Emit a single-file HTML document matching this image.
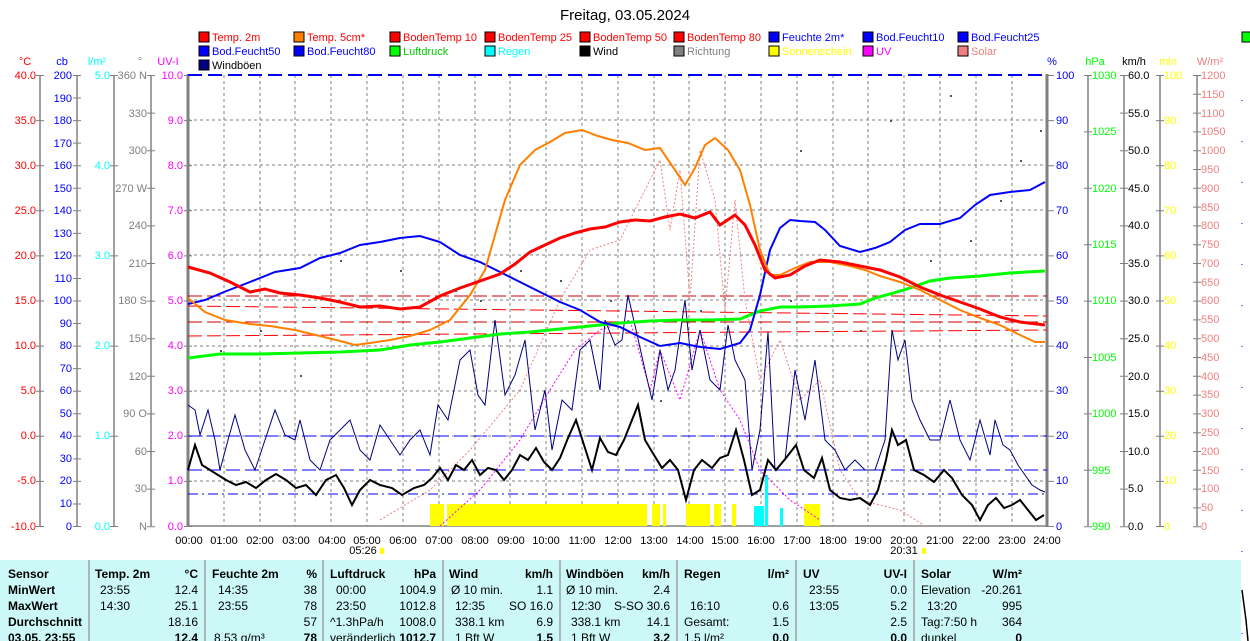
<!DOCTYPE html>
<html><head><meta charset="utf-8"><style>
html,body{margin:0;padding:0;background:#fff;width:1250px;height:641px;overflow:hidden}
svg{position:absolute;left:0;top:0}
text{font-family:"Liberation Sans",sans-serif;font-size:11px}
.t{font-size:12px}
.b{font-weight:bold}
</style></head><body>
<svg width="1250" height="641" xmlns="http://www.w3.org/2000/svg">
<text x="625" y="20" text-anchor="middle" style="font-size:15px">Freitag, 03.05.2024</text>
<g>
<rect x="199" y="32" width="10" height="10" fill="#f00" stroke="#000"/><text x="212" y="41" fill="#f00">Temp. 2m</text>
<rect x="294" y="32" width="10" height="10" fill="#ff8000" stroke="#000"/><text x="307" y="41" fill="#f00">Temp. 5cm*</text>
<rect x="390" y="32" width="10" height="10" fill="#f00" stroke="#000"/><text x="403" y="41" fill="#f00">BodenTemp 10</text>
<rect x="485" y="32" width="10" height="10" fill="#f00" stroke="#000"/><text x="498" y="41" fill="#f00">BodenTemp 25</text>
<rect x="580" y="32" width="10" height="10" fill="#f00" stroke="#000"/><text x="593" y="41" fill="#f00">BodenTemp 50</text>
<rect x="674" y="32" width="10" height="10" fill="#f00" stroke="#000"/><text x="687" y="41" fill="#f00">BodenTemp 80</text>
<rect x="769" y="32" width="10" height="10" fill="#00f" stroke="#000"/><text x="782" y="41" fill="#00f">Feuchte 2m*</text>
<rect x="863" y="32" width="10" height="10" fill="#00f" stroke="#000"/><text x="876" y="41" fill="#00f">Bod.Feucht10</text>
<rect x="958" y="32" width="10" height="10" fill="#00f" stroke="#000"/><text x="971" y="41" fill="#00f">Bod.Feucht25</text>
<rect x="1242" y="32" width="10" height="10" fill="#0f0" stroke="#000"/>
<rect x="199" y="46" width="10" height="10" fill="#00f" stroke="#000"/><text x="212" y="55" fill="#00f">Bod.Feucht50</text>
<rect x="294" y="46" width="10" height="10" fill="#00f" stroke="#000"/><text x="307" y="55" fill="#00f">Bod.Feucht80</text>
<rect x="390" y="46" width="10" height="10" fill="#0f0" stroke="#000"/><text x="403" y="55" fill="#0c0">Luftdruck</text>
<rect x="485" y="46" width="10" height="10" fill="#0ff" stroke="#000"/><text x="498" y="55" fill="#0ff">Regen</text>
<rect x="580" y="46" width="10" height="10" fill="#000" stroke="#000"/><text x="593" y="55">Wind</text>
<rect x="674" y="46" width="10" height="10" fill="#808080" stroke="#000"/><text x="687" y="55" fill="#808080">Richtung</text>
<rect x="769" y="46" width="10" height="10" fill="#ff0" stroke="#000"/><text x="782" y="55" fill="#ff0">Sonnenschein</text>
<rect x="863" y="46" width="10" height="10" fill="#f0f" stroke="#000"/><text x="876" y="55" fill="#f0f">UV</text>
<rect x="958" y="46" width="10" height="10" fill="#f08080" stroke="#000"/><text x="971" y="55" fill="#f08080">Solar</text>
<rect x="199" y="60" width="10" height="10" fill="#000080" stroke="#000"/><text x="212" y="69">Windböen</text>
</g>
<text x="25" y="65" fill="#f00" text-anchor="middle">°C</text>
<text x="62" y="65" fill="#00f" text-anchor="middle">cb</text>
<text x="97" y="65" fill="#0ff" text-anchor="middle">l/m²</text>
<text x="140" y="65" fill="#808080" text-anchor="middle">°</text>
<text x="168" y="65" fill="#f0f" text-anchor="middle">UV-I</text>
<text x="1052" y="65" fill="#00f" text-anchor="middle">%</text>
<text x="1095" y="65" fill="#0f0" text-anchor="middle">hPa</text>
<text x="1134" y="65" text-anchor="middle">km/h</text>
<text x="1168" y="65" fill="#ff0" text-anchor="middle">min</text>
<text x="1210" y="65" fill="#f08080" text-anchor="middle">W/m²</text>
<g stroke="#808080" stroke-width="1.5">
<line x1="40" y1="75" x2="40" y2="526"/><line x1="77" y1="75" x2="77" y2="526"/><line x1="114" y1="75" x2="114" y2="526"/><line x1="151" y1="75" x2="151" y2="526"/>
<line x1="1088" y1="75" x2="1088" y2="526"/><line x1="1124" y1="75" x2="1124" y2="526"/><line x1="1160" y1="75" x2="1160" y2="526"/><line x1="1197" y1="75" x2="1197" y2="526"/>
</g>
<!-- ticks -->
<g stroke="#808080" stroke-width="8">
<line x1="40" y1="75" x2="40" y2="528" stroke-dasharray="1,44.1"/>
<line x1="77" y1="75" x2="77" y2="528" stroke-dasharray="1,21.55"/>
<line x1="114" y1="75" x2="114" y2="528" stroke-dasharray="1,89.2"/>
<line x1="151" y1="75" x2="151" y2="528" stroke-dasharray="1,36.6"/>
<line x1="188" y1="75" x2="188" y2="528" stroke-dasharray="1,44.1"/>
<line x1="1050" y1="75" x2="1050" y2="528" stroke-dasharray="1,44.1"/>
<line x1="1088" y1="75" x2="1088" y2="528" stroke-dasharray="1,55.4"/>
<line x1="1124" y1="75" x2="1124" y2="528" stroke-dasharray="1,36.6"/>
<line x1="1160" y1="75" x2="1160" y2="528" stroke-dasharray="1,44.1"/>
<line x1="1197" y1="75" x2="1197" y2="528" stroke-dasharray="1,17.8"/>
</g>
<g fill="#f00" text-anchor="end">
<text x="36" y="79">40.0</text><text x="36" y="124">35.0</text><text x="36" y="169">30.0</text><text x="36" y="214">25.0</text><text x="36" y="259">20.0</text><text x="36" y="304">15.0</text><text x="36" y="349">10.0</text><text x="36" y="394">5.0</text><text x="36" y="439">0.0</text><text x="36" y="484">-5.0</text><text x="36" y="530">-10.0</text>
</g>
<g fill="#00f" text-anchor="end">
<text x="72" y="79">200</text><text x="72" y="102">190</text><text x="72" y="124">180</text><text x="72" y="147">170</text><text x="72" y="169">160</text><text x="72" y="192">150</text><text x="72" y="214">140</text><text x="72" y="237">130</text><text x="72" y="259">120</text><text x="72" y="282">110</text><text x="72" y="304">100</text><text x="72" y="327">90</text><text x="72" y="349">80</text><text x="72" y="372">70</text><text x="72" y="394">60</text><text x="72" y="417">50</text><text x="72" y="439">40</text><text x="72" y="462">30</text><text x="72" y="484">20</text><text x="72" y="507">10</text><text x="72" y="530">0</text>
</g>
<g fill="#0ff" text-anchor="end">
<text x="110" y="79">5.0</text><text x="110" y="169">4.0</text><text x="110" y="259">3.0</text><text x="110" y="349">2.0</text><text x="110" y="439">1.0</text><text x="110" y="530">0.0</text>
</g>
<g fill="#808080" text-anchor="end">
<text x="147" y="79">360 N</text><text x="147" y="117">330</text><text x="147" y="154">300</text><text x="147" y="192">270 W</text><text x="147" y="229">240</text><text x="147" y="267">210</text><text x="147" y="304">180 S</text><text x="147" y="342">150</text><text x="147" y="380">120</text><text x="147" y="417">90 O</text><text x="147" y="455">60</text><text x="147" y="492">30</text><text x="147" y="530">N</text>
</g>
<g fill="#f0f" text-anchor="end">
<text x="183" y="79">10.0</text><text x="183" y="124">9.0</text><text x="183" y="169">8.0</text><text x="183" y="214">7.0</text><text x="183" y="259">6.0</text><text x="183" y="304">5.0</text><text x="183" y="349">4.0</text><text x="183" y="394">3.0</text><text x="183" y="439">2.0</text><text x="183" y="484">1.0</text><text x="183" y="530">0.0</text>
</g>
<g fill="#00f">
<text x="1056" y="79">100</text><text x="1056" y="124">90</text><text x="1056" y="169">80</text><text x="1056" y="214">70</text><text x="1056" y="259">60</text><text x="1056" y="304">50</text><text x="1056" y="349">40</text><text x="1056" y="394">30</text><text x="1056" y="439">20</text><text x="1056" y="484">10</text><text x="1056" y="530">0</text>
</g>
<g fill="#0f0">
<text x="1092" y="79">1030</text><text x="1092" y="135">1025</text><text x="1092" y="192">1020</text><text x="1092" y="248">1015</text><text x="1092" y="304">1010</text><text x="1092" y="361">1005</text><text x="1092" y="417">1000</text><text x="1092" y="474">995</text><text x="1092" y="530">990</text>
</g>
<g>
<text x="1128" y="79">60.0</text><text x="1128" y="117">55.0</text><text x="1128" y="154">50.0</text><text x="1128" y="192">45.0</text><text x="1128" y="229">40.0</text><text x="1128" y="267">35.0</text><text x="1128" y="304">30.0</text><text x="1128" y="342">25.0</text><text x="1128" y="380">20.0</text><text x="1128" y="417">15.0</text><text x="1128" y="455">10.0</text><text x="1128" y="492">5.0</text><text x="1128" y="530">0.0</text>
</g>
<g fill="#ff0">
<text x="1164" y="79">100</text><text x="1164" y="124">90</text><text x="1164" y="169">80</text><text x="1164" y="214">70</text><text x="1164" y="259">60</text><text x="1164" y="304">50</text><text x="1164" y="349">40</text><text x="1164" y="394">30</text><text x="1164" y="439">20</text><text x="1164" y="484">10</text><text x="1164" y="530">0</text>
</g>
<g fill="#f08080">
<text x="1201" y="79">1200</text><text x="1201" y="98">1150</text><text x="1201" y="117">1100</text><text x="1201" y="135">1050</text><text x="1201" y="154">1000</text><text x="1201" y="173">950</text><text x="1201" y="192">900</text><text x="1201" y="211">850</text><text x="1201" y="229">800</text><text x="1201" y="248">750</text><text x="1201" y="267">700</text><text x="1201" y="286">650</text><text x="1201" y="304">600</text><text x="1201" y="323">550</text><text x="1201" y="342">500</text><text x="1201" y="361">450</text><text x="1201" y="380">400</text><text x="1201" y="398">350</text><text x="1201" y="417">300</text><text x="1201" y="436">250</text><text x="1201" y="455">200</text><text x="1201" y="474">150</text><text x="1201" y="492">100</text><text x="1201" y="511">50</text><text x="1201" y="530">0</text>
</g>
<g stroke="#808080" stroke-dasharray="3,3" stroke-width="1">
<line x1="188" y1="120" x2="1047" y2="120"/><line x1="188" y1="165" x2="1047" y2="165"/><line x1="188" y1="210" x2="1047" y2="210"/><line x1="188" y1="255" x2="1047" y2="255"/><line x1="188" y1="300" x2="1047" y2="300"/><line x1="188" y1="346" x2="1047" y2="346"/><line x1="188" y1="391" x2="1047" y2="391"/><line x1="188" y1="436" x2="1047" y2="436"/><line x1="188" y1="481" x2="1047" y2="481"/>
<line x1="224" y1="75" x2="224" y2="526"/><line x1="260" y1="75" x2="260" y2="526"/><line x1="295" y1="75" x2="295" y2="526"/><line x1="331" y1="75" x2="331" y2="526"/><line x1="367" y1="75" x2="367" y2="526"/><line x1="403" y1="75" x2="403" y2="526"/><line x1="439" y1="75" x2="439" y2="526"/><line x1="475" y1="75" x2="475" y2="526"/><line x1="510" y1="75" x2="510" y2="526"/><line x1="546" y1="75" x2="546" y2="526"/><line x1="582" y1="75" x2="582" y2="526"/><line x1="618" y1="75" x2="618" y2="526"/><line x1="654" y1="75" x2="654" y2="526"/><line x1="689" y1="75" x2="689" y2="526"/><line x1="725" y1="75" x2="725" y2="526"/><line x1="761" y1="75" x2="761" y2="526"/><line x1="797" y1="75" x2="797" y2="526"/><line x1="833" y1="75" x2="833" y2="526"/><line x1="868" y1="75" x2="868" y2="526"/><line x1="904" y1="75" x2="904" y2="526"/><line x1="940" y1="75" x2="940" y2="526"/><line x1="976" y1="75" x2="976" y2="526"/><line x1="1012" y1="75" x2="1012" y2="526"/>
</g>
<line x1="188" y1="74" x2="188" y2="527" stroke="#808080" stroke-width="3"/>
<line x1="1047" y1="74" x2="1047" y2="527" stroke="#808080" stroke-width="3"/>
<line x1="188" y1="526" x2="1047" y2="526" stroke="#808080" stroke-width="1.5"/>
<line x1="188" y1="75" x2="1047" y2="75" stroke="#00f" stroke-width="2" stroke-dasharray="14,6"/>
<g stroke-dasharray="14,5" stroke-width="1">
<line x1="188" y1="296" x2="1047" y2="296" stroke="#c00"/>
<line x1="188" y1="306" x2="1047" y2="316" stroke="#f00"/>
<line x1="188" y1="322" x2="1047" y2="322" stroke="#c00"/>
<line x1="188" y1="336" x2="1047" y2="330" stroke="#f00"/>
<line x1="188" y1="436" x2="1047" y2="436" stroke="#00f"/>
<line x1="188" y1="470" x2="1047" y2="470" stroke="#00f"/>
<line x1="188" y1="494" x2="1047" y2="494" stroke="#00f" stroke-dasharray="10,4,2,4"/>
</g>
<g fill="#ff0">
<rect x="430" y="504" width="14" height="22"/><rect x="447" y="504" width="200" height="22"/><rect x="652" y="504" width="8" height="22"/><rect x="663" y="504" width="3" height="22"/><rect x="686" y="504" width="24" height="22"/><rect x="714" y="504" width="7" height="22"/><rect x="732" y="504" width="4" height="22"/><rect x="804" y="504" width="16" height="22"/>
<rect x="380" y="548" width="4" height="6"/><rect x="922" y="548" width="4" height="6"/>
</g>
<g fill="#0ff"><rect x="754" y="506" width="10" height="20"/><rect x="765" y="475" width="3" height="51"/><rect x="780" y="508" width="3" height="18"/></g>
<polyline fill="none" stroke="#f08080" stroke-width="1" stroke-dasharray="2,2" points="380,520 430,490 470,450 520,390 560,300 590,250 620,240 640,200 660,160 670,230 680,170 690,300 700,150 715,200 725,310 735,200 745,300 760,380 780,340 800,400 820,380 840,470 860,500 900,510 925,526"/>
<polyline fill="none" stroke="#f0f" stroke-width="1" stroke-dasharray="2,2" points="440,526 480,490 520,440 550,390 575,350 600,330 630,320 650,390 660,350 680,400 700,330 720,390 740,420 760,470 790,500 820,520"/>
<polyline fill="none" stroke="#000080" stroke-width="1" points="188,405 195,410 200,435 208,410 215,440 220,470 228,440 235,415 245,450 255,470 265,440 275,410 285,435 295,440 300,420 310,460 320,470 330,440 340,430 350,420 360,450 370,460 380,425 390,440 400,455 410,440 420,430 430,455 438,405 448,420 460,360 470,350 478,395 485,405 495,320 505,395 515,375 525,340 535,430 545,390 552,450 562,400 572,410 580,350 590,340 600,390 605,320 615,345 622,340 628,295 636,330 645,370 652,400 660,350 668,390 675,370 685,300 692,370 700,330 710,380 720,390 728,325 735,360 745,380 752,470 760,430 768,332 775,470 785,460 795,370 805,420 815,360 825,440 835,450 845,470 855,460 865,470 875,470 885,440 892,330 898,360 905,340 912,400 920,420 930,440 940,440 950,400 960,440 970,460 980,420 990,455 995,420 1003,445 1010,450 1018,465 1025,475 1032,485 1040,490 1045,492"/>
<polyline fill="none" stroke="#000" stroke-width="2" points="188,470 195,445 202,465 210,470 218,475 226,480 236,485 246,482 256,488 266,480 276,474 286,480 296,488 306,485 316,495 326,480 336,475 344,488 352,505 360,490 370,480 380,485 392,488 402,495 414,488 424,485 432,478 440,468 448,480 456,465 464,470 472,460 480,475 488,468 496,470 504,480 512,470 520,455 528,460 536,448 544,462 552,470 560,458 568,438 576,420 584,445 592,470 600,438 608,452 616,455 624,440 632,420 638,405 645,440 654,455 662,468 670,460 678,470 686,500 694,470 702,460 712,468 720,458 728,455 736,430 744,460 752,495 760,490 768,460 776,470 786,458 796,445 804,470 814,478 822,458 830,490 840,498 850,500 860,498 870,505 878,490 886,460 892,430 898,445 906,440 914,470 924,475 934,482 944,470 952,478 962,495 972,505 980,520 988,505 996,498 1004,508 1012,505 1020,500 1028,510 1036,520 1044,515"/>
<polyline fill="none" stroke="#0f0" stroke-width="3" points="188,358 220,354 260,354 300,353 340,352 380,350 410,345 440,342 470,338 500,334 530,332 560,329 590,326 620,323 650,321 680,320 710,320 740,319 760,311 780,307 800,307 830,306 860,304 875,298 890,294 910,288 930,281 950,278 980,276 1010,273 1045,271"/>
<polyline fill="none" stroke="#00f" stroke-width="2" points="188,304 205,300 224,292 250,282 275,272 300,268 320,258 340,253 360,245 380,242 400,238 420,236 440,242 460,255 480,262 500,272 520,282 540,292 560,302 580,310 600,322 620,327 640,337 660,346 680,343 700,347 720,349 740,343 750,330 760,295 770,250 780,228 790,220 800,221 815,222 825,230 840,246 860,252 875,248 890,242 905,230 920,224 940,224 960,218 975,205 990,195 1010,192 1030,190 1045,182"/>
<polyline fill="none" stroke="#ff8000" stroke-width="2" points="188,298 205,312 225,320 250,324 270,326 295,330 320,336 340,341 355,345 370,343 390,340 410,336 430,330 450,320 470,295 485,270 495,235 505,200 520,165 535,150 550,142 565,133 582,130 598,136 612,140 628,143 645,150 660,148 675,170 685,185 695,168 705,145 715,138 728,150 740,170 750,205 760,250 770,275 780,275 795,268 810,262 830,262 850,266 865,270 880,276 900,282 920,290 940,300 960,310 980,318 1000,325 1020,335 1035,342 1045,342"/>
<polyline fill="none" stroke="#f00" stroke-width="3" points="188,267 210,273 230,282 250,292 265,289 280,293 300,295 320,298 340,302 360,307 380,306 400,309 420,307 440,296 460,288 480,281 500,274 515,264 530,252 545,245 560,238 575,233 590,229 605,227 620,222 635,220 650,221 665,217 680,214 695,218 710,212 720,225 735,215 745,225 755,245 765,270 775,278 790,275 805,266 820,260 840,262 860,266 880,270 900,277 920,287 940,295 960,302 980,309 1000,317 1020,322 1045,325"/>
<g fill="#555">
<rect x="340" y="260" width="2" height="2"/><rect x="400" y="270" width="2" height="2"/><rect x="455" y="290" width="2" height="2"/><rect x="300" y="375" width="2" height="2"/><rect x="260" y="330" width="2" height="2"/><rect x="520" y="270" width="2" height="2"/><rect x="560" y="280" width="2" height="2"/><rect x="610" y="300" width="2" height="2"/><rect x="700" y="310" width="2" height="2"/><rect x="790" y="300" width="2" height="2"/><rect x="800" y="150" width="2" height="2"/><rect x="950" y="95" width="2" height="2"/><rect x="1000" y="200" width="2" height="2"/><rect x="1040" y="130" width="2" height="2"/><rect x="860" y="330" width="2" height="2"/><rect x="930" y="260" width="2" height="2"/><rect x="1020" y="160" width="2" height="2"/><rect x="220" y="350" width="2" height="2"/><rect x="480" y="300" width="2" height="2"/><rect x="660" y="400" width="2" height="2"/><rect x="890" y="120" width="2" height="2"/><rect x="970" y="240" width="2" height="2"/>
</g>
<g text-anchor="middle">
<text x="189" y="544">00:00</text><text x="224" y="544">01:00</text><text x="260" y="544">02:00</text><text x="296" y="544">03:00</text><text x="332" y="544">04:00</text><text x="367" y="544">05:00</text><text x="403" y="544">06:00</text><text x="439" y="544">07:00</text><text x="475" y="544">08:00</text><text x="511" y="544">09:00</text><text x="546" y="544">10:00</text><text x="582" y="544">11:00</text><text x="618" y="544">12:00</text><text x="654" y="544">13:00</text><text x="690" y="544">14:00</text><text x="725" y="544">15:00</text><text x="761" y="544">16:00</text><text x="797" y="544">17:00</text><text x="833" y="544">18:00</text><text x="868" y="544">19:00</text><text x="904" y="544">20:00</text><text x="940" y="544">21:00</text><text x="976" y="544">22:00</text><text x="1012" y="544">23:00</text><text x="1047" y="544">24:00</text>
<text x="363" y="554">05:26</text><text x="904" y="554">20:31</text>
</g>
<line x1="1242" y1="100" x2="1242" y2="641" stroke="#00f" stroke-width="1" stroke-dasharray="1,40"/>
<polyline fill="none" stroke="#000" stroke-width="1.5" points="1242,590 1246,620 1248,641"/>
<rect x="0" y="560" width="1241" height="81" fill="#ccf8f8"/>
<g stroke="#a0a0a0" stroke-width="1.5">
<line x1="89" y1="560" x2="89" y2="641"/><line x1="205" y1="560" x2="205" y2="641"/><line x1="323" y1="560" x2="323" y2="641"/><line x1="443" y1="560" x2="443" y2="641"/><line x1="560" y1="560" x2="560" y2="641"/><line x1="677" y1="560" x2="677" y2="641"/><line x1="796" y1="560" x2="796" y2="641"/><line x1="914" y1="560" x2="914" y2="641"/>
</g>
<g class="t">
<text class="t b" x="8" y="578">Sensor</text><text class="t b" x="8" y="594">MinWert</text><text class="t b" x="8" y="610">MaxWert</text><text class="t b" x="8" y="626">Durchschnitt</text><text class="t b" x="8" y="642">03.05. 23:55</text>
<text class="t b" x="95" y="578">Temp. 2m</text><text class="t b" x="198" y="578" text-anchor="end">°C</text>
<text class="t" x="100" y="594">23:55</text><text class="t" x="198" y="594" text-anchor="end">12.4</text>
<text class="t" x="100" y="610">14:30</text><text class="t" x="198" y="610" text-anchor="end">25.1</text>
<text class="t" x="198" y="626" text-anchor="end">18.16</text><text class="t b" x="198" y="642" text-anchor="end">12.4</text>
<text class="t b" x="212" y="578">Feuchte 2m</text><text class="t b" x="317" y="578" text-anchor="end">%</text>
<text class="t" x="218" y="594">14:35</text><text class="t" x="317" y="594" text-anchor="end">38</text>
<text class="t" x="218" y="610">23:55</text><text class="t" x="317" y="610" text-anchor="end">78</text>
<text class="t" x="317" y="626" text-anchor="end">57</text><text class="t" x="214" y="642">8.53 g/m³</text><text class="t b" x="317" y="642" text-anchor="end">78</text>
<text class="t b" x="330" y="578">Luftdruck</text><text class="t b" x="436" y="578" text-anchor="end">hPa</text>
<text class="t" x="336" y="594">00:00</text><text class="t" x="436" y="594" text-anchor="end">1004.9</text>
<text class="t" x="336" y="610">23:50</text><text class="t" x="436" y="610" text-anchor="end">1012.8</text>
<text class="t" x="330" y="626">^1.3hPa/h</text><text class="t" x="436" y="626" text-anchor="end">1008.0</text>
<text class="t" x="330" y="642">veränderlich</text><text class="t b" x="436" y="642" text-anchor="end">1012.7</text>
<text class="t b" x="449" y="578">Wind</text><text class="t b" x="553" y="578" text-anchor="end">km/h</text>
<text class="t" x="451" y="594">Ø 10 min.</text><text class="t" x="553" y="594" text-anchor="end">1.1</text>
<text class="t" x="455" y="610">12:35</text><text class="t" x="553" y="610" text-anchor="end">SO 16.0</text>
<text class="t" x="455" y="626">338.1 km</text><text class="t" x="553" y="626" text-anchor="end">6.9</text>
<text class="t" x="455" y="642">1 Bft W</text><text class="t b" x="553" y="642" text-anchor="end">1.5</text>
<text class="t b" x="566" y="578">Windböen</text><text class="t b" x="670" y="578" text-anchor="end">km/h</text>
<text class="t" x="566" y="594">Ø 10 min.</text><text class="t" x="670" y="594" text-anchor="end">2.4</text>
<text class="t" x="571" y="610">12:30</text><text class="t" x="670" y="610" text-anchor="end">S-SO 30.6</text>
<text class="t" x="571" y="626">338.1 km</text><text class="t" x="670" y="626" text-anchor="end">14.1</text>
<text class="t" x="571" y="642">1 Bft W</text><text class="t b" x="670" y="642" text-anchor="end">3.2</text>
<text class="t b" x="684" y="578">Regen</text><text class="t b" x="789" y="578" text-anchor="end">l/m²</text>
<text class="t" x="690" y="610">16:10</text><text class="t" x="789" y="610" text-anchor="end">0.6</text>
<text class="t" x="684" y="626">Gesamt:</text><text class="t" x="789" y="626" text-anchor="end">1.5</text>
<text class="t" x="684" y="642">1.5 l/m²</text><text class="t b" x="789" y="642" text-anchor="end">0.0</text>
<text class="t b" x="803" y="578">UV</text><text class="t b" x="907" y="578" text-anchor="end">UV-I</text>
<text class="t" x="809" y="594">23:55</text><text class="t" x="907" y="594" text-anchor="end">0.0</text>
<text class="t" x="809" y="610">13:05</text><text class="t" x="907" y="610" text-anchor="end">5.2</text>
<text class="t" x="907" y="626" text-anchor="end">2.5</text><text class="t b" x="907" y="642" text-anchor="end">0.0</text>
<text class="t b" x="921" y="578">Solar</text><text class="t b" x="1022" y="578" text-anchor="end">W/m²</text>
<text class="t" x="921" y="594">Elevation</text><text class="t" x="1022" y="594" text-anchor="end">-20.261</text>
<text class="t" x="927" y="610">13:20</text><text class="t" x="1022" y="610" text-anchor="end">995</text>
<text class="t" x="921" y="626">Tag:7:50 h</text><text class="t" x="1022" y="626" text-anchor="end">364</text>
<text class="t" x="921" y="642">dunkel</text><text class="t b" x="1022" y="642" text-anchor="end">0</text>
</g>
</svg>
</body></html>
